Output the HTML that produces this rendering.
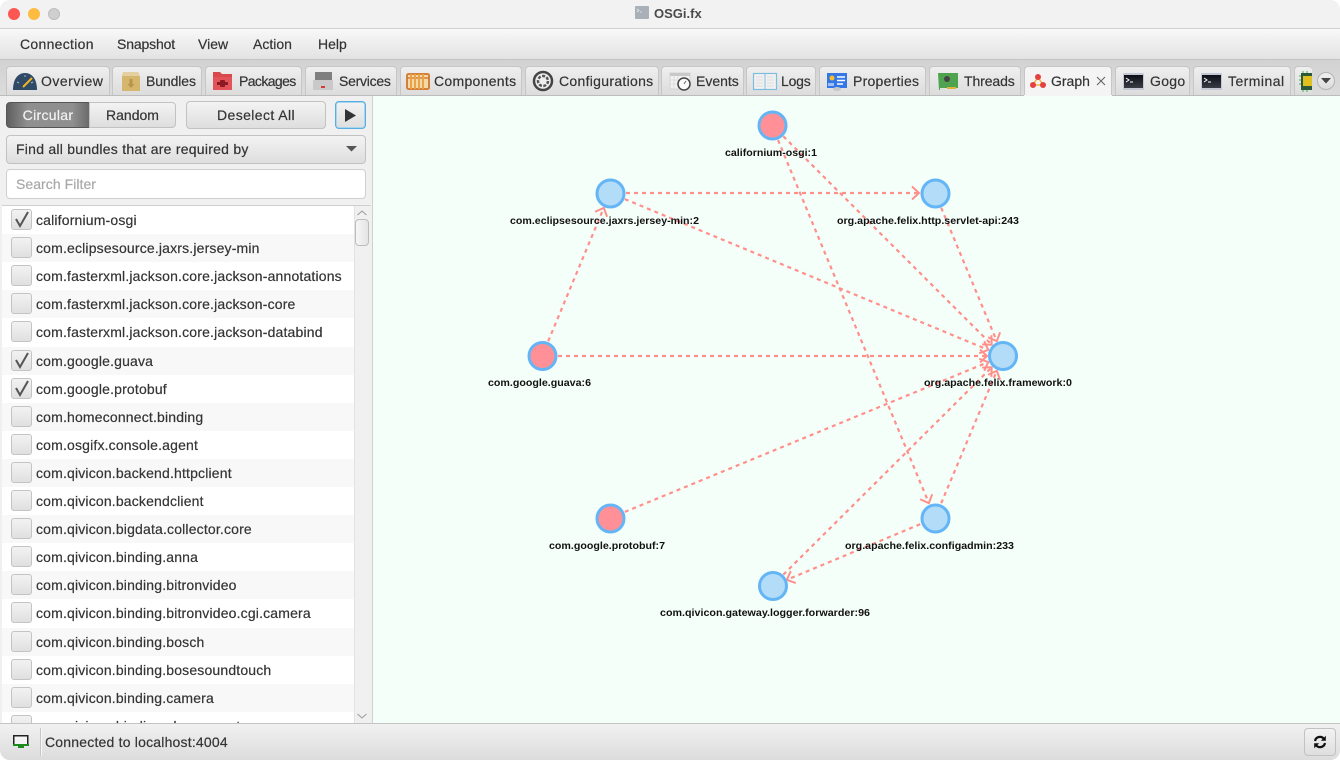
<!DOCTYPE html>
<html><head><meta charset="utf-8"><title>OSGi.fx</title>
<style>
*{box-sizing:border-box}
html,body{margin:0;padding:0;width:1340px;height:760px;overflow:hidden;background:#fff}
body{font-family:"Liberation Sans",sans-serif;color:#343434;font-size:14px;-webkit-text-stroke:.2px}
#app{position:absolute;left:0;top:0;width:1340px;height:760px;overflow:hidden;border-radius:10px;background:#f0f0f0}
.a{position:absolute;white-space:nowrap}
.t{position:absolute;top:66px;height:29px;border:1px solid #c6c6c6;border-bottom:none;border-radius:4px 4px 0 0;background:linear-gradient(#efefef,#dcdcdc)}
.t span{position:absolute;top:6px;white-space:nowrap;line-height:17px}
.t svg{position:absolute;left:0;top:0}
.b{position:absolute;border:1px solid #c2c2c2;border-radius:4px;background:linear-gradient(#f3f3f3,#dedede);text-align:center;font-size:14px;line-height:25px}
.r{position:absolute;left:2px;width:352px;height:28.1px;line-height:28.600px;padding-left:34px;font-size:14px;letter-spacing:.17px;white-space:nowrap;overflow:hidden}
.r:nth-child(even){background:#f8f8f8}
.r i{position:absolute;left:9px;top:3px;width:21px;height:21px;border:1px solid #c4c4c4;border-radius:3px;background:linear-gradient(#f2f2f2,#e0e0e0)}
.r svg{position:absolute;left:9px;top:3px}
svg text{-webkit-text-stroke:0}
</style></head><body><div id="app">

<div class="a" style="left:0;top:0;width:1340px;height:29px;background:#f2f2f2;border-bottom:1px solid #d0d0d0"></div>
<div class="a" style="left:8px;top:8px;width:12px;height:12px;border-radius:50%;background:#fc5753"></div>
<div class="a" style="left:28px;top:8px;width:12px;height:12px;border-radius:50%;background:#fdbc40"></div>
<div class="a" style="left:48px;top:8px;width:12px;height:12px;border-radius:50%;background:#cfcfcf;border:1px solid #bdbdbd"></div>
<svg class="a" style="left:635px;top:6px" width="14" height="14"><rect width="14" height="13" rx="1" fill="#a9b0b8"/><path d="M2 3l2 1.500-2 1.500M5 6h2" stroke="#e6e8ea" fill="none" stroke-width=".8"/></svg>
<div class="a" style="left:654px;top:5px;font-weight:bold;font-size:13px;line-height:17px;color:#4a4a4a;-webkit-text-stroke:0">OSGi.fx</div>

<div class="a" style="left:0;top:29px;width:1340px;height:31px;background:linear-gradient(#f8f8f8,#e3e3e3);border-bottom:1px solid #c4c4c4"></div>
<div class="a" style="left:20px;top:36px;line-height:17px;letter-spacing:.3px">Connection</div>
<div class="a" style="left:117px;top:36px;line-height:17px;letter-spacing:-.15px">Snapshot</div>
<div class="a" style="left:198px;top:36px;line-height:17px">View</div>
<div class="a" style="left:253px;top:36px;line-height:17px">Action</div>
<div class="a" style="left:318px;top:36px;line-height:17px">Help</div>

<div class="a" style="left:0;top:60px;width:1340px;height:36px;background:linear-gradient(#d2d2d2,#dcdcdc)"></div>

<div class="t" style="left:6px;width:104px"><span style="left:34px;letter-spacing:.5px">Overview</span>
<svg width="34" height="28"><path d="M6 23C6 12 11 6 18 6S30 12 30 23z" fill="#2e4a66"/><path d="M10 15l2 1M18 8v2M26 15l-2 1" stroke="#9fb6cc"/><path d="M16 20l9-9" stroke="#eeb422" stroke-width="2"/></svg></div>
<div class="t" style="left:112px;width:90px"><span style="left:33px;letter-spacing:-.1px">Bundles</span>
<svg width="32" height="28"><path d="M10 5h15l2 4v15H9V9z" fill="#e3cf9f"/><rect x="9" y="9" width="18" height="15" fill="#d6b56c"/><path d="M16.500 12h3v5h2l-3.500 4-3.500-4h2z" fill="#b8954c"/></svg></div>
<div class="t" style="left:205px;width:97px"><span style="left:33px;letter-spacing:-.6px">Packages</span>
<svg width="32" height="28"><path d="M7 5h7l2 2h10v16H7z" fill="#d94a4f"/><path d="M7 10h19v13H7z" fill="#e5535a"/><rect x="11" y="15" width="11" height="3" fill="#8c1a22"/><rect x="14" y="13" width="5" height="7" rx="1" fill="#8c1a22"/></svg></div>
<div class="t" style="left:305px;width:92px"><span style="left:33px;letter-spacing:-.25px">Services</span>
<svg width="30" height="28"><rect x="9" y="5" width="17" height="8" fill="#7f7f7f"/><rect x="7" y="13" width="20" height="10" fill="#c9c9c9"/><rect x="15" y="19" width="4" height="2" fill="#d83a3a"/></svg></div>
<div class="t" style="left:400px;width:122px"><span style="left:33px;letter-spacing:.3px">Components</span>
<svg width="32" height="28"><rect x="6" y="7" width="22" height="15" rx="1.500" fill="#f4d9a8" stroke="#d47f3a" stroke-width="2"/><path d="M6 11h22" stroke="#d47f3a" stroke-width="1.500"/><path d="M10 7v15M14 7v15M18 7v15M22 7v15" stroke="#e9a347" stroke-width="2"/></svg></div>
<div class="t" style="left:525px;width:134px"><span style="left:33px;letter-spacing:.3px">Configurations</span>
<svg width="32" height="28"><circle cx="17" cy="14" r="9" fill="#eee" stroke="#444" stroke-width="2.500"/><circle cx="17" cy="14" r="5" fill="none" stroke="#555" stroke-width="2.500" stroke-dasharray="3 1.500"/><circle cx="17" cy="14" r="2" fill="#eee"/></svg></div>
<div class="t" style="left:661px;width:83px"><span style="left:34px">Events</span>
<svg width="32" height="28"><rect x="8" y="6" width="20" height="16" fill="#f2f2f2" stroke="#d4d4d4"/><rect x="8" y="6" width="20" height="3" fill="#c9c9c9"/><path d="M12 9v13M16 9v13M8 13h12M8 17h10" stroke="#ddd"/><circle cx="22" cy="17" r="6" fill="#fafafa" stroke="#444" stroke-width="1.500"/><path d="M22 17l2-3" stroke="#666"/></svg></div>
<div class="t" style="left:746px;width:70px"><span style="left:34px;letter-spacing:-.2px">Logs</span>
<svg width="32" height="28"><rect x="6.500" y="6.500" width="23" height="16" fill="#f1f1f1" stroke="#7fbde0" stroke-width="1.200"/><path d="M18 7v15" stroke="#7fbde0"/><path d="M9 10h7M9 13h7M9 16h7M9 19h7M20 10h7M20 13h7M20 16h7M20 19h7" stroke="#ddd"/></svg></div>
<div class="t" style="left:819px;width:107px"><span style="left:33px;letter-spacing:.25px">Properties</span>
<svg width="32" height="28"><rect x="7" y="6" width="20" height="15" fill="#3577e6"/><circle cx="12" cy="11" r="2.500" fill="#f6c02c"/><path d="M17 10h8M17 13.500h8M17 17h6" stroke="#fff" stroke-width="1.500"/><path d="M8 16h6v3H8z" fill="#9fc0f4"/><ellipse cx="17" cy="22" rx="4" ry="2" fill="#c8c8c8"/></svg></div>
<div class="t" style="left:929px;width:92px"><span style="left:34px;letter-spacing:-.1px">Threads</span>
<svg width="32" height="28"><path d="M8 6h20v15h-18v2h-1z" fill="#4fa34f"/><circle cx="17" cy="12" r="3" fill="#444"/><path d="M17 20h9v2h-9z" fill="#e2b33c"/></svg></div>
<div class="t" style="left:1024px;width:88px;background:#f4f4f4;height:30px"><span style="left:26px">Graph</span>
<svg width="26" height="28"><path d="M13 10l-5 8h10z" fill="none" stroke="#efb73e" stroke-width="1.500"/><circle cx="13" cy="10" r="3" fill="#e3403f"/><circle cx="8" cy="18" r="3" fill="#e3403f"/><circle cx="18" cy="18" r="3" fill="#e3403f"/></svg>
<svg style="left:71px;top:9px" width="10" height="10"><path d="M1 1l8 8M9 1l-8 8" stroke="#666" stroke-width="1.100"/></svg></div>
<div class="t" style="left:1115px;width:75px"><span style="left:34px;letter-spacing:.3px">Gogo</span>
<svg width="32" height="28"><defs><linearGradient id="tg" x1="0" y1="0" x2="0" y2="1"><stop offset="0" stop-color="#0c0f16"/><stop offset="1" stop-color="#3a3d46"/></linearGradient></defs><rect x="7" y="6" width="21" height="17" rx="1" fill="#c4c7d4"/><rect x="8" y="8" width="19" height="13" fill="url(#tg)"/><path d="M10 11l3 2-3 2M14 15h3" stroke="#fff" fill="none"/></svg></div>
<div class="t" style="left:1193px;width:98px"><span style="left:34px;letter-spacing:.45px">Terminal</span>
<svg width="32" height="28"><rect x="7" y="6" width="21" height="17" rx="1" fill="#c4c7d4"/><rect x="8" y="8" width="19" height="13" fill="url(#tg)"/><path d="M10 11l3 2-3 2M14 15h3" stroke="#fff" fill="none"/></svg></div>
<div class="t" style="left:1294px;width:18px;border-right:none"><svg width="18" height="28"><rect x="6" y="6" width="11" height="17" fill="#2a5a3a"/><rect x="8" y="9" width="9" height="10" fill="#e0c020"/><path d="M4 9h2M4 13h2M4 17h2M8 4v2M12 4v2M8 23v2M12 23v2" stroke="#4caf50"/></svg></div>
<div class="a" style="left:1317px;top:72px;width:18px;height:18px;border-radius:50%;border:1px solid #b4b4b4;background:linear-gradient(#f0f0f0,#dcdcdc)"></div>
<svg class="a" style="left:1321px;top:78px" width="10" height="6"><path d="M0 0h10l-5 5.500z" fill="#444"/></svg>

<div class="a" style="left:0;top:95px;width:1340px;height:1px;background:#bcbcbc"></div>
<div class="a" style="left:1024px;top:95px;width:88px;height:1px;background:#f4f4f4"></div>

<div class="a" style="left:0;top:96px;width:372px;height:628px;background:#f0f0f0"></div>
<div class="b" style="left:6px;top:102px;width:84px;height:26px;border-color:#555;border-radius:4px 0 0 4px;background:linear-gradient(90deg,#5f5f5f,#8f8f8f 25%,#8f8f8f 80%,#6b6b6b);color:#f2f2f2;letter-spacing:.3px">Circular</div>
<div class="b" style="left:89px;top:102px;width:87px;height:26px;border-radius:0 4px 4px 0">Random</div>
<div class="b" style="left:186px;top:101px;width:140px;height:28px;line-height:27px;letter-spacing:.4px">Deselect All</div>
<div class="b" style="left:335px;top:101px;width:31px;height:28px;border-color:#58aee0;box-shadow:0 0 0 1px #a8d6ef inset"></div>
<svg class="a" style="left:345px;top:109px" width="12" height="13"><path d="M0 0l11 6.500-11 6.500z" fill="#333"/></svg>
<div class="b" style="left:6px;top:135px;width:360px;height:29px;text-align:left;padding-left:9px;line-height:27px;letter-spacing:.25px">Find all bundles that are required by</div>
<svg class="a" style="left:346px;top:146px" width="11" height="6"><path d="M0 0h11l-5.500 5.500z" fill="#555"/></svg>
<div class="a" style="left:6px;top:169px;width:360px;height:30px;background:#fff;border:1px solid #cfcfcf;border-radius:4px;padding-left:9px;line-height:28px;color:#a8a8a8;letter-spacing:.05px">Search Filter</div>

<div class="a" style="left:2px;top:205px;width:369px;height:519px;background:#fff;overflow:hidden;border-top:1px solid #cfcfcf">
<div style="position:absolute;left:-2px;top:0;width:354px;height:518px">
<div class="r" style="top:0"><i></i><svg width="21" height="21"><path d="M5 10l4 7 8-14" fill="none" stroke="#555" stroke-width="2"/></svg>californium-osgi</div>
<div class="r" style="top:28.100px"><i></i>com.eclipsesource.jaxrs.jersey-min</div>
<div class="r" style="top:56.200px"><i></i>com.fasterxml.jackson.core.jackson-annotations</div>
<div class="r" style="top:84.300px"><i></i>com.fasterxml.jackson.core.jackson-core</div>
<div class="r" style="top:112.400px"><i></i>com.fasterxml.jackson.core.jackson-databind</div>
<div class="r" style="top:140.500px"><i></i><svg width="21" height="21"><path d="M5 10l4 7 8-14" fill="none" stroke="#555" stroke-width="2"/></svg>com.google.guava</div>
<div class="r" style="top:168.600px"><i></i><svg width="21" height="21"><path d="M5 10l4 7 8-14" fill="none" stroke="#555" stroke-width="2"/></svg>com.google.protobuf</div>
<div class="r" style="top:196.700px"><i></i>com.homeconnect.binding</div>
<div class="r" style="top:224.800px"><i></i>com.osgifx.console.agent</div>
<div class="r" style="top:252.900px"><i></i>com.qivicon.backend.httpclient</div>
<div class="r" style="top:281px"><i></i>com.qivicon.backendclient</div>
<div class="r" style="top:309.100px"><i></i>com.qivicon.bigdata.collector.core</div>
<div class="r" style="top:337.200px"><i></i>com.qivicon.binding.anna</div>
<div class="r" style="top:365.300px"><i></i>com.qivicon.binding.bitronvideo</div>
<div class="r" style="top:393.400px"><i></i>com.qivicon.binding.bitronvideo.cgi.camera</div>
<div class="r" style="top:421.500px"><i></i>com.qivicon.binding.bosch</div>
<div class="r" style="top:449.600px"><i></i>com.qivicon.binding.bosesoundtouch</div>
<div class="r" style="top:477.700px"><i></i>com.qivicon.binding.camera</div>
<div class="r" style="top:505.800px"><i></i>com.qivicon.binding.chromecast</div>
</div>
<div style="position:absolute;left:352px;top:0;width:17px;height:518px;background:#f0f0f0;border-left:1px solid #e2e2e2"></div>
<div style="position:absolute;left:353px;top:13px;width:14px;height:27px;background:linear-gradient(90deg,#f6f6f6,#e4e4e4);border:1px solid #bdbdbd;border-radius:4px"></div>
<svg style="position:absolute;left:355px;top:4px" width="10" height="6"><path d="M.5 5l4.500-4 4.500 4" fill="none" stroke="#999"/></svg>
<svg style="position:absolute;left:355px;top:507px" width="10" height="6"><path d="M.5 1l4.500 4 4.500-4" fill="none" stroke="#999"/></svg>
</div>

<svg class="a" style="left:372px;top:96px" width="968" height="628" viewBox="372 96 968 628">
<defs><marker id="m" markerUnits="userSpaceOnUse" markerWidth="16" markerHeight="18" refX="12" refY="9" orient="auto"><path d="M5 2.500l7 6.500-7 6.500" fill="none" stroke="#ff8f8a" stroke-width="2"/></marker></defs>
<rect x="372" y="96" width="968" height="628" fill="#f5fffa"/>
<rect x="372" y="96" width="1" height="628" fill="#d0d0d0"/>
<g stroke="#ff8f8a" stroke-width="2.200" stroke-dasharray="4 4" fill="none">
<line x1="783.300" y1="136.300" x2="991.700" y2="344.700" marker-end="url(#m)"/>
<line x1="778" y1="140" x2="928.900" y2="503.200" marker-end="url(#m)"/>
<line x1="626" y1="193" x2="919" y2="193" marker-end="url(#m)"/>
<line x1="624.800" y1="199.100" x2="988.200" y2="349.900" marker-end="url(#m)"/>
<line x1="941.200" y1="207.800" x2="996.800" y2="341.200" marker-end="url(#m)"/>
<line x1="548.200" y1="341.200" x2="603.800" y2="207.800" marker-end="url(#m)"/>
<line x1="558" y1="356" x2="987" y2="356" marker-end="url(#m)"/>
<line x1="624.800" y1="511.900" x2="988.200" y2="362.100" marker-end="url(#m)"/>
<line x1="941.200" y1="503.200" x2="996.800" y2="370.800" marker-end="url(#m)"/>
<line x1="920.200" y1="524.200" x2="786.800" y2="579.800" marker-end="url(#m)"/>
<line x1="783.300" y1="574.700" x2="991.700" y2="367.300" marker-end="url(#m)"/>
</g>
<g stroke="#64b5f6" stroke-width="3">
<circle cx="772.500" cy="125.500" r="13.500" fill="#ff9097"/>
<circle cx="610.500" cy="193.500" r="13.500" fill="#b3dcf8"/>
<circle cx="935.500" cy="193.500" r="13.500" fill="#b3dcf8"/>
<circle cx="542.500" cy="356" r="13.500" fill="#ff9097"/>
<circle cx="1003" cy="356" r="13.500" fill="#b3dcf8"/>
<circle cx="610.500" cy="518.500" r="13.500" fill="#ff9097"/>
<circle cx="935.500" cy="518.500" r="13.500" fill="#b3dcf8"/>
<circle cx="773" cy="586" r="13.500" fill="#b3dcf8"/>
</g>
<g font-family="'Liberation Sans',sans-serif" font-weight="bold" font-size="10.500" fill="#111">
<text x="725" y="156" textLength="92" lengthAdjust="spacingAndGlyphs">californium-osgi:1</text>
<text x="510" y="224" textLength="189" lengthAdjust="spacingAndGlyphs">com.eclipsesource.jaxrs.jersey-min:2</text>
<text x="837" y="224" textLength="182" lengthAdjust="spacingAndGlyphs">org.apache.felix.http.servlet-api:243</text>
<text x="488" y="386" textLength="103" lengthAdjust="spacingAndGlyphs">com.google.guava:6</text>
<text x="924" y="386" textLength="148" lengthAdjust="spacingAndGlyphs">org.apache.felix.framework:0</text>
<text x="549" y="549" textLength="116" lengthAdjust="spacingAndGlyphs">com.google.protobuf:7</text>
<text x="845" y="549" textLength="169" lengthAdjust="spacingAndGlyphs">org.apache.felix.configadmin:233</text>
<text x="660" y="616" textLength="210" lengthAdjust="spacingAndGlyphs">com.qivicon.gateway.logger.forwarder:96</text>
</g>
</svg>

<div class="a" style="left:0;top:723px;width:1340px;height:37px;background:linear-gradient(#f1f1f1,#dcdcdc);border-top:1px solid #c4c4c4"></div>
<svg class="a" style="left:13px;top:735px" width="17" height="15"><rect x=".750" y=".750" width="14" height="9" fill="#f4f4f4" stroke="#222" stroke-width="1.500"/><rect y="9" width="16" height="2" fill="#1c8a1c"/><rect x="5" y="11" width="6" height="2" fill="#1c8a1c"/></svg>
<div class="a" style="left:40px;top:728px;width:1px;height:28px;background:#c6c6c6;box-shadow:1px 0 0 #f6f6f6"></div>
<div class="a" style="left:45px;top:734px;line-height:17px;letter-spacing:.2px">Connected to localhost:4004</div>
<div class="b" style="left:1304px;top:728px;width:32px;height:28px"></div>
<svg class="a" style="left:1313px;top:735px" width="14" height="14" viewBox="0 0 14 14"><path d="M2 6a5 5 0 0 1 9-2" fill="none" stroke="#111" stroke-width="2.200"/><path d="M12.800.800v5h-5z" fill="#111"/><path d="M12 8a5 5 0 0 1-9 2" fill="none" stroke="#111" stroke-width="2.200"/><path d="M1.200 13.200v-5h5z" fill="#111"/></svg>

</div></body></html>
